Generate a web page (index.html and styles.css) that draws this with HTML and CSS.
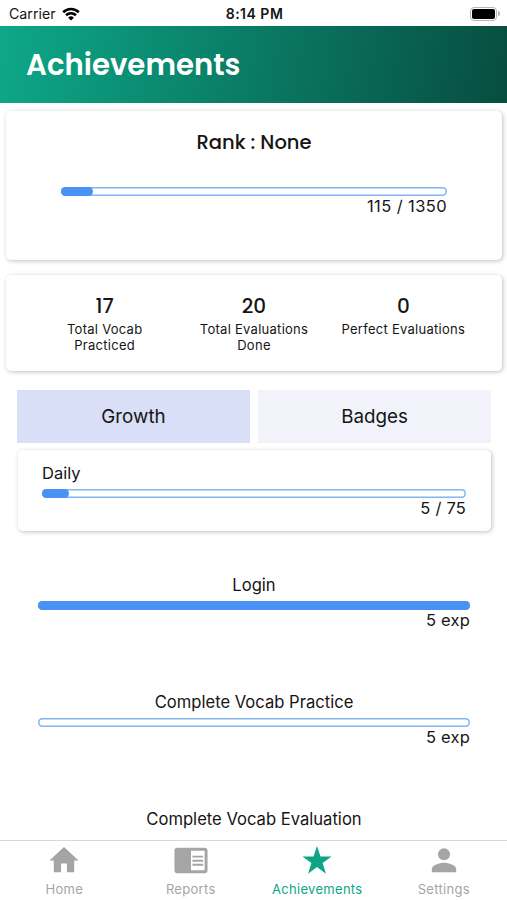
FILE: index.html
```
<!DOCTYPE html>
<html lang="en">
<head>
    <meta charset="UTF-8">
    <title>Achievements</title>
    <link rel="stylesheet" href="styles.css">
</head>
<body>
    <div class="app">
        <div class="status-bar">
            <div class="carrier">
                <span>Carrier</span>
                <svg class="wifi" viewBox="0 0 18 14">
                    <path d="M1.2 5.2a11.2 11.2 0 0 1 15.6 0" />
                    <path d="M4 8.3a7.2 7.2 0 0 1 10 0" />
                    <path class="wifi-dot" d="M9 13.6 6.1 10.7a4.2 4.2 0 0 1 5.8 0z" />
                </svg>
            </div>
            <div class="time">8:14 PM</div>
            <div class="battery">
                <div class="battery-body"></div>
                <div class="battery-cap"></div>
            </div>
        </div>

        <header class="header">
            <h1>Achievements</h1>
        </header>

        <main class="content">
            <div class="card rank-card">
                <h2>Rank : None</h2>
                <div class="progress"><div class="progress-fill" style="width: 8.2%"></div></div>
                <div class="progress-text">115 / 1350</div>
            </div>

            <div class="card stats-card">
                <div class="stat">
                    <div class="stat-value">17</div>
                    <div class="stat-label">Total Vocab<br>Practiced</div>
                </div>
                <div class="stat">
                    <div class="stat-value">20</div>
                    <div class="stat-label">Total Evaluations<br>Done</div>
                </div>
                <div class="stat">
                    <div class="stat-value">0</div>
                    <div class="stat-label">Perfect Evaluations</div>
                </div>
            </div>

            <div class="tabs">
                <div class="tab active">Growth</div>
                <div class="tab">Badges</div>
            </div>

            <div class="card daily-card">
                <div class="daily-title">Daily</div>
                <div class="progress"><div class="progress-fill" style="width: 6.4%"></div></div>
                <div class="progress-text">5 / 75</div>
            </div>

            <div class="tasks">
                <div class="task">
                    <div class="task-title">Login</div>
                    <div class="progress"><div class="progress-fill" style="width: 100%"></div></div>
                    <div class="progress-text">5 exp</div>
                </div>
                <div class="task">
                    <div class="task-title">Complete Vocab Practice</div>
                    <div class="progress"></div>
                    <div class="progress-text">5 exp</div>
                </div>
                <div class="task">
                    <div class="task-title">Complete Vocab Evaluation</div>
                </div>
            </div>
        </main>

        <nav class="bottom-nav">
            <div class="nav-item">
                <svg viewBox="0 0 36 36"><path d="M15 30V21h6v9h7.5V18H33L18 4 3 18h4.5v12z" /></svg>
                <span>Home</span>
            </div>
            <div class="nav-item">
                <svg viewBox="0 0 36 36">
                    <path fill-rule="evenodd" d="M4 5h28a3 3 0 0 1 3 3v20a3 3 0 0 1-3 3H4a3 3 0 0 1-3-3V8a3 3 0 0 1 3-3zM18 8v20h14V8z" />
                    <path d="M19.5 13h11v2h-11zM19.5 17.2h11v2h-11zM19.5 21.4h11v2h-11z" />
                </svg>
                <span>Reports</span>
            </div>
            <div class="nav-item active">
                <svg viewBox="0 0 36 36"><path d="M18 3 21.6 13.8H33L23.8 20.6 27.2 31.5 18 24.8 8.8 31.5 12.2 20.6 3 13.8H14.4z" /></svg>
                <span>Achievements</span>
            </div>
            <div class="nav-item">
                <svg viewBox="0 0 36 36">
                    <circle cx="18" cy="11.5" r="6.2" />
                    <path d="M5.5 30v-3.2c0-4.2 8.1-6.5 12.5-6.5s12.5 2.3 12.5 6.5V30z" />
                </svg>
                <span>Settings</span>
            </div>
        </nav>
    </div>
</body>
</html>
```
FILE: styles.css
```
* {
    box-sizing: border-box;
}

body {
    margin: 0;
    background: #fff;
    color: #151515;
    font-family: Inter, "Liberation Sans", sans-serif;
}

.app {
    display: flex;
    flex-direction: column;
    height: 900px;
    overflow: hidden;
}

/* Status bar */
.status-bar {
    display: grid;
    grid-template-columns: 1fr auto 1fr;
    align-items: center;
    flex: none;
    height: 26px;
    padding: 1px 7px 0 9px;
    font-size: 14.2px;
}

.carrier {
    display: flex;
    align-items: center;
    gap: 6px;
}

.wifi {
    width: 18px;
    height: 14px;
    fill: none;
    stroke: #000;
    stroke-width: 2.6;
}

.wifi .wifi-dot {
    fill: #000;
    stroke: none;
}

.time {
    font-size: 14px;
    font-weight: 600;
    letter-spacing: 0.5px;
}

.battery {
    display: flex;
    align-items: center;
    justify-content: flex-end;
    gap: 1px;
}

.battery-body {
    width: 27px;
    height: 14px;
    border: 1px solid #b5b5b5;
    border-radius: 4px;
    padding: 1px;
    background: #000 content-box;
}

.battery-cap {
    width: 2px;
    height: 5px;
    border-radius: 0 2px 2px 0;
    background: #b5b5b5;
}

.header {
    flex: none;
    height: 77px;
    padding-left: 26px;
    background: linear-gradient(100deg, #0da888, #074d40);
    color: #fff;
}

.header h1 {
    margin: 0;
    font-family: Poppins, Inter, sans-serif;
    font-size: 29.2px;
    font-weight: 600;
    line-height: 77px;
}

.content {
    flex: 1;
    min-height: 0;
    padding: 8px 5px 0 6px;
    overflow: hidden;
}

.card {
    background: #fff;
    border-radius: 5px;
    box-shadow: 1px 1px 4px rgba(0, 0, 0, 0.25);
}

/* Progress bars */
.progress {
    height: 9px;
    border-radius: 5px;
    box-shadow: inset 0 0 0 1.5px #83b3f5;
}

.progress-fill {
    height: 9px;
    border-radius: 5px;
    background: #4a91f5;
}

.progress-text {
    font-size: 16.5px;
    letter-spacing: 0.2px;
    line-height: 21px;
    text-align: right;
}

.rank-card {
    height: 149px;
    padding: 17px 55px 0;
}

.rank-card h2 {
    margin: 0 0 29px;
    font-family: Poppins, Inter, sans-serif;
    font-size: 19.5px;
    font-weight: 500;
    line-height: 30px;
    text-align: center;
}

.rank-card .progress-text {
    letter-spacing: 0.4px;
}

.stats-card {
    display: flex;
    height: 96px;
    margin-top: 15px;
    padding: 17px 24px 0;
}

.stat {
    flex: 1;
    text-align: center;
}

.stat-value {
    font-family: Poppins, Inter, sans-serif;
    font-size: 20px;
    font-weight: 500;
    line-height: 29px;
}

.stat-label {
    font-size: 13px;
    letter-spacing: 0.27px;
    line-height: 16px;
    white-space: nowrap;
}

.tabs {
    display: flex;
    gap: 8px;
    margin: 19px 11px 0;
}

.tab {
    flex: 1;
    height: 53px;
    background: #f1f2fa;
    font-size: 18.8px;
    line-height: 54px;
    text-align: center;
}

.tab.active {
    background: #d9dff6;
}

.daily-card {
    height: 81px;
    margin: 7px 11px 0 12px;
    padding: 12px 25px 0 24px;
}

.daily-title {
    margin-bottom: 5px;
    font-size: 16.5px;
    line-height: 22px;
}

.tasks {
    padding: 43px 32px 0;
}

.task {
    height: 117px;
}

.task-title {
    margin-bottom: 5px;
    font-size: 16.6px;
    line-height: 22px;
    text-align: center;
}

/* Bottom navigation */
.bottom-nav {
    display: flex;
    flex: none;
    height: 60px;
    padding-left: 1px;
    border-top: 1px solid #d8d8d8;
    background: #fff;
}

.nav-item {
    flex: 1;
    display: flex;
    flex-direction: column;
    align-items: center;
    padding-top: 2px;
    color: #a5a5a5;
    font-size: 13px;
    letter-spacing: 0.3px;
}

.nav-item svg {
    width: 36px;
    height: 36px;
    fill: currentColor;
}

.nav-item span {
    line-height: 22px;
}

.nav-item.active {
    color: #0da585;
}
```
